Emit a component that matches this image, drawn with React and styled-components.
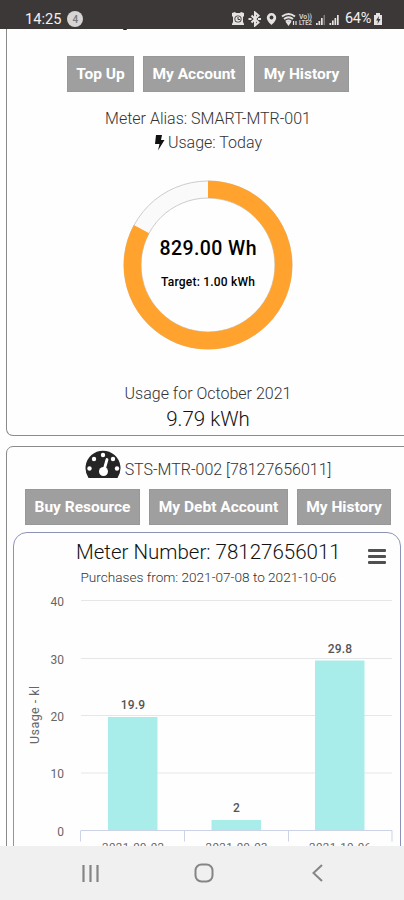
import React from 'react';
import styled, { createGlobalStyle } from 'styled-components';

const GlobalStyle = createGlobalStyle`
  * { box-sizing: border-box; }
  body { margin: 0; background: #fff; font-family: Roboto, "Liberation Sans", sans-serif; }
`;

const Screen = styled.div`
  display: flex;
  flex-direction: column;
  width: 404px;
  height: 900px;
  overflow: hidden;
  background: #fefefe;
`;

const StatusBar = styled.header`
  display: flex;
  align-items: center;
  flex: 0 0 29px;
  padding: 9px 21px 0 25px;
  background: #3d3838;
  color: #f2f0f0;
`;

const Clock = styled.span`
  font-size: 14.6px;
  line-height: 18px;
`;

const Count = styled.span`
  display: flex;
  align-items: center;
  justify-content: center;
  width: 16px;
  height: 16px;
  margin-left: 6px;
  border-radius: 50%;
  background: #d6d4d4;
  color: #777;
  font-size: 10px;
  font-weight: 500;
`;

const StatusIcons = styled.svg`
  margin-left: auto;
  display: block;
`;

const Battery = styled.span`
  font-size: 14.5px;
  line-height: 18px;
  width: 28px;
  letter-spacing: -0.3px;
`;

const Content = styled.main`
  display: flex;
  flex-direction: column;
  flex: 1;
  min-height: 0;
  gap: 10px;
  padding-left: 6px;
  overflow: hidden;
`;

const Card = styled.section`
  display: flex;
  flex-direction: column;
  align-items: center;
  flex: 0 0 ${(p) => p.$height}px;
  width: 408px;
  padding-right: 4px;
  border: 1px solid #8b8b8b;
  border-width: ${(p) => (p.$scrolled ? '0 1px 1px' : '1px')};
  border-radius: ${(p) => (p.$scrolled ? '0 0 7px 7px' : '7px')};
`;

const Remnant = styled.div`
  align-self: flex-start;
  width: 4px;
  height: 1px;
  margin-left: 116px;
  border-radius: 0 0 2px 2px;
  background: #222;
`;

const ButtonRow = styled.div`
  display: flex;
  gap: 9px;
  margin-top: ${(p) => p.$top}px;
`;

const Button = styled.button`
  width: ${(p) => p.$width}px;
  height: 36px;
  padding: 0 0 1px;
  border: 1px solid #989898;
  background: #9f9f9f;
  color: #fff;
  font: 700 15.5px Roboto, sans-serif;
  white-space: nowrap;
`;

const Line = styled.div`
  display: flex;
  align-items: center;
  justify-content: center;
  height: ${(p) => p.$height}px;
  margin-top: ${(p) => p.$top || 0}px;
  color: ${(p) => p.$color || '#333'};
  font-size: ${(p) => p.$size}px;
  font-weight: ${(p) => p.$weight || 300};
  white-space: nowrap;
`;

const Bolt = styled.svg`
  margin-right: 3px;
`;

const Gauge = styled.svg`
  display: block;
  margin-top: 24px;
`;

const MeterIcon = styled.svg`
  margin-right: 4px;
`;

const MeterTitle = styled.div`
  display: flex;
  align-items: flex-end;
  height: 32px;
`;

const ChartPanel = styled.div`
  display: flex;
  flex-direction: column;
  width: 388px;
  height: 360px;
  margin: 7px 0 0 6px;
  align-self: flex-start;
  border: 1px solid #8d93b8;
  border-radius: 14px;
`;

const ChartHeader = styled.div`
  display: flex;
  justify-content: space-between;
  height: 53px;
  padding: 7px 14px 0 62px;
`;

const Titles = styled.div`
  display: flex;
  flex-direction: column;
  align-items: center;
`;

const MenuButton = styled.button`
  width: 18px;
  height: 15px;
  margin-top: 9px;
  padding: 0;
  display: flex;
  flex-direction: column;
  justify-content: space-between;
  border: 0;
  background: none;
`;

const MenuStroke = styled.i`
  width: 18px;
  height: 3px;
  border-radius: 1px;
  background: #505050;
`;

const Chart = styled.svg`
  display: block;
`;

const NavBar = styled.nav`
  display: flex;
  align-items: center;
  justify-content: space-between;
  flex: 0 0 54px;
  padding: 0 76px 0 80px;
  background: #f0f0f0;
`;

const gridLines = [
  { value: 40, y: 14.5 },
  { value: 30, y: 72.5 },
  { value: 20, y: 129.5 },
  { value: 10, y: 187 },
  { value: 0, y: 244.5 },
];

const bars = [
  { date: '2021-09-02', value: 19.9, x: 94, top: 131 },
  { date: '2021-09-03', value: 2, x: 197.5, top: 234 },
  { date: '2021-10-06', value: 29.8, x: 301, top: 74.5 },
];

function Status() {
  return (
    <StatusBar>
      <Clock>14:25</Clock>
      <Count>4</Count>
      <StatusIcons width="113" height="16" viewBox="0 0 113 16" fill="#e4e2e2">
        <path d="M0 2l3-1 1 1h4l1-1 3 1v3l-1 1v5l1 2v1H0v-1l1-2V6L0 5z" />
        <circle cx="6" cy="8" r="3.600" fill="#3d3838" />
        <circle cx="6" cy="8" r="2.700" />
        <path d="M6 6v2.500h2" stroke="#3d3838" fill="none" />
        <path d="M19.500 4.500l7 7-3.500 3v-13l3.500 3-7 7M16.500 8h3M26 8h3" stroke="#e4e2e2" strokeWidth="2" fill="none" />
        <path d="M39.500 2a4.700 4.700 0 0 0-4.700 4.700C34.800 10 39.500 14 39.500 14s4.700-4 4.700-7.300A4.700 4.700 0 0 0 39.500 2z" />
        <circle cx="39.500" cy="6.500" r="1.900" fill="#3d3838" />
        <path d="M50 5.500q6.500-5 13 0M52 8q4.500-3.500 9 0M54 10.500q2.500-2 5 0" stroke="#e4e2e2" strokeWidth="1.900" fill="none" />
        <path d="M56.500 14l-2-3h4zM61.500 14v-4M64 14v-4" stroke="#e4e2e2" strokeWidth="1.200" />
        <g fill="#d0cece" fontFamily="Roboto, sans-serif" fontWeight="700" fontSize="7">
          <text x="67" y="7.500" textLength="13" lengthAdjust="spacingAndGlyphs">Vo))</text>
          <text x="67" y="14" textLength="13" lengthAdjust="spacingAndGlyphs">LTE2</text>
        </g>
        <path d="M84 12h1.700v2H84zM86.500 10h1.700v4h-1.700zM89 7h1.700v7H89z" />
        <path d="M91.500 4h1.500v10h-1.500z" opacity=".4" />
        <path d="M97.500 12h1.700v2h-1.700zM100 9.500h1.700V14H100zM102.500 7h1.700v7h-1.700zM105 4h1.700v10H105z" />
      </StatusIcons>
      <Battery>64%</Battery>
      <svg width="10" height="14" viewBox="0 0 10 14">
        <path d="M3 1h4v2h2v10H1V3h2z" fill="#e4e2e2" />
        <path d="M6 4L3 8.500h2L4.500 12 7.500 7H5.500z" fill="#3d3838" />
      </svg>
    </StatusBar>
  );
}

function UsageGauge() {
  return (
    <Gauge width="174" height="174" viewBox="0 0 174 174">
      <circle cx="87" cy="87" r="75.500" fill="none" stroke="#fafafa" strokeWidth="17" />
      <circle cx="87" cy="87" r="84" fill="none" stroke="#ccc" />
      <circle cx="87" cy="87" r="67" fill="none" stroke="#ccc" />
      <circle
        cx="87" cy="87" r="75.600" fill="none" stroke="#ffa32e" strokeWidth="17.400"
        pathLength="1000" strokeDasharray="829 171" transform="rotate(-90 87 87)"
      />
      <g fill="#000" textAnchor="middle" fontFamily="Roboto, sans-serif">
        <text x="87" y="76.500" fontSize="19.500" fontWeight="500" textLength="97">829.00 Wh</text>
        <text x="87" y="107.500" fontSize="12" fontWeight="500" textLength="94">Target: 1.00 kWh</text>
      </g>
    </Gauge>
  );
}

function PurchaseChart() {
  return (
    <Chart width="386" height="275" viewBox="0 0 386 275" fontFamily="Roboto, sans-serif" fill="#666">
      {gridLines.map((line) => (
        <g key={line.value}>
          <path d={`M67 ${line.y}H378`} stroke={line.value ? '#e6e6e6' : '#ccd3e6'} />
          <text x="50" y={line.y + 5} fontSize="12" textAnchor="end">{line.value}</text>
        </g>
      ))}
      <path d="M66.500 244.500v11M170.500 244.500v11M274.500 244.500v11M378 244.500v11" stroke="#ccd3e6" />
      {bars.map((bar) => (
        <g key={bar.date} textAnchor="middle">
          <rect x={bar.x} y={bar.top} width="49.500" height={244 - bar.top} fill="#a9edeb" />
          <text x={bar.x + 25} y={bar.top - 8} fontSize="12" fontWeight="500" fill="#555" letterSpacing="0.200">{bar.value}</text>
          <text x={bar.x + 25} y="264.500" fontSize="11.500" textLength="62">{bar.date}</text>
        </g>
      ))}
      <text transform="translate(25 129) rotate(-90)" textAnchor="middle" fontSize="12.500" textLength="58">Usage - kl</text>
    </Chart>
  );
}

export default function App() {
  return (
    <>
      <GlobalStyle />
      <Screen>
        <Status />
        <Content>
          <Card $height={407} $scrolled>
            <Remnant />
            <ButtonRow $top={26}>
              <Button $width={67}>Top Up</Button>
              <Button $width={102}>My Account</Button>
              <Button $width={95}>My History</Button>
            </ButtonRow>
            <Line $size={16} $height={24} $top={14}>Meter Alias: SMART-MTR-001</Line>
            <Line $size={16} $height={24}>
              <Bolt width="11" height="17" viewBox="0 0 11 17">
                <path d="M2 1h6L7 6h3.500L4 16.500 5.500 10H1z" fill="#111" />
              </Bolt>
              Usage: Today
            </Line>
            <UsageGauge />
            <Line $size={16} $height={24} $top={29}>Usage for October 2021</Line>
            <Line $size={20.5} $height={28} $color="#111">9.79 kWh</Line>
          </Card>
          <Card $height={460}>
            <MeterTitle>
              <MeterIcon width="36" height="29" viewBox="0 0 36 29">
                <path d="M3.500 28A17.500 17.500 0 1 1 32.500 28z" fill="#252525" />
                <g fill="#fff">
                  <circle cx="4.500" cy="18.500" r="2.200" /><circle cx="9" cy="9" r="2.200" />
                  <circle cx="18" cy="5" r="2.200" /><circle cx="28" cy="9" r="2.200" />
                  <circle cx="32" cy="18.500" r="2.200" /><circle cx="18.500" cy="21.500" r="4.500" />
                </g>
                <path d="M22 9.500L18.500 22" stroke="#fff" strokeWidth="2.800" strokeLinecap="round" />
              </MeterIcon>
              <Line $size={16} $height={19}>STS-MTR-002 [78127656011]</Line>
            </MeterTitle>
            <ButtonRow $top={10}>
              <Button $width={115}>Buy Resource</Button>
              <Button $width={139}>My Debt Account</Button>
              <Button $width={94}>My History</Button>
            </ButtonRow>
            <ChartPanel>
              <ChartHeader>
                <Titles>
                  <Line $size={20.5} $height={26} $color="#111">Meter Number: 78127656011</Line>
                  <Line $size={13.6} $height={20} $top={4}>Purchases from: 2021-07-08 to 2021-10-06</Line>
                </Titles>
                <MenuButton aria-label="Chart menu">
                  <MenuStroke /><MenuStroke /><MenuStroke />
                </MenuButton>
              </ChartHeader>
              <PurchaseChart />
            </ChartPanel>
          </Card>
        </Content>
        <NavBar>
          <svg width="22" height="22" viewBox="0 0 22 22">
            <path d="M3.500 3v17M10.500 3v17M17.500 3v17" stroke="#858585" strokeWidth="2.200" />
          </svg>
          <svg width="22" height="22" viewBox="0 0 22 22">
            <rect x="2.500" y="2.500" width="17" height="17" rx="6" fill="none" stroke="#858585" strokeWidth="2" />
          </svg>
          <svg width="22" height="22" viewBox="0 0 22 22">
            <path d="M16 3L7.500 11l8.500 8" fill="none" stroke="#858585" strokeWidth="2" />
          </svg>
        </NavBar>
      </Screen>
    </>
  );
}
